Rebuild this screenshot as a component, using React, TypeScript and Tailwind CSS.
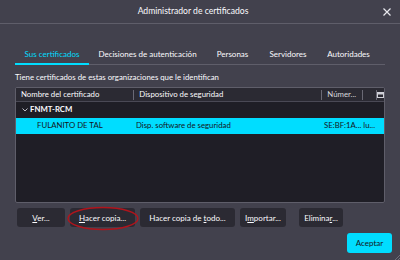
import React from "react";

export default function App() {
  const btn =
    "h-[19px] rounded-[3px] bg-[#2b2a33] text-[8px] text-[#fbfbfe] flex items-center justify-center whitespace-nowrap";
  return (
    <div
      className="w-[400px] h-[260px] bg-[#42414d] text-[#fbfbfe] flex flex-col relative overflow-hidden"
      style={{ fontFamily: 'Lato, "Noto Sans", sans-serif' }}
    >
      {/* title bar */}
      <div className="h-[24px] border-b border-[#5f5e6a] flex items-center justify-center pr-[14px] relative shrink-0">
        <span className="text-[8.6px]">Administrador de certificados</span>
        <svg
          className="absolute right-[9px] top-[8px]"
          width="8"
          height="8"
          viewBox="0 0 8 8"
        >
          <path d="M0.5 0.5 L7.5 7.5 M7.5 0.5 L0.5 7.5" stroke="#e8e8ee" strokeWidth="1.2" />
        </svg>
      </div>

      {/* tabs */}
      <div className="mx-[15px] mt-[20px] flex border-b border-[#5f5e6a] h-[21px] text-[8px] whitespace-nowrap">
        <div className="w-[74px] shrink-0 flex items-center justify-center text-[#00ddff] border-b-2 border-[#00ddff] -mb-px">
          Sus certificados
        </div>
        <div className="w-[117px] shrink-0 flex items-center justify-center">Decisiones de autenticación</div>
        <div className="w-[53px] shrink-0 flex items-center justify-center">Personas</div>
        <div className="w-[58px] shrink-0 flex items-center justify-center">Servidores</div>
        <div className="w-[63px] shrink-0 flex items-center justify-center">Autoridades</div>
      </div>

      <div className="mx-[15px] mt-[7px] text-[7.8px] leading-[11px] whitespace-nowrap">
        Tiene certificados de estas organizaciones que le identifican
      </div>

      {/* table */}
      <div className="mx-[15px] mt-[4px] h-[116px] border border-[#5f5e6a] rounded-[2px] bg-[#1f1e26] flex flex-col overflow-hidden shrink-0">
        <div className="h-[14px] bg-[#2b2a33] border-b border-[#4a4955] flex items-center text-[7.8px] shrink-0 whitespace-nowrap">
          <div className="w-[119px] pl-[5px] border-r border-[#6a6975] h-[10px] flex items-center">
            Nombre del certificado
          </div>
          <div className="w-[189px] pl-[5px] border-r border-[#6a6975] h-[10px] flex items-center">
            Dispositivo de seguridad
          </div>
          <div className="w-[41px] pl-[5px] border-r border-[#6a6975] h-[10px] flex items-center text-[#d8d8de]">
            Númer...
          </div>
          <div className="w-[14px] border-r border-[#6a6975] h-[10px]" />
          <div className="flex-1 flex items-center justify-center">
            <svg width="7" height="6" viewBox="0 0 7 6">
              <rect x="0.5" y="0.5" width="6" height="5" fill="none" stroke="#d0d0d8" />
              <rect x="1" y="1" width="5" height="1.5" fill="#d0d0d8" />
            </svg>
          </div>
        </div>
        <div className="h-[16px] flex items-center text-[7.8px] font-bold pl-[6px] shrink-0">
          <svg width="6" height="4" viewBox="0 0 6 4" className="mr-[2px]">
            <path d="M0.5 0.5 L3 3 L5.5 0.5" stroke="#cfcfd8" fill="none" strokeWidth="0.9" />
          </svg>
          FNMT-RCM
        </div>
        <div className="h-[16px] bg-[#00ddff] text-[#15141a] flex items-center text-[7.8px] shrink-0 whitespace-nowrap">
          <div className="w-[119px] pl-[21px]">FULANITO DE TAL</div>
          <div className="w-[189px] pl-[1px]">Disp. software de seguridad</div>
          <div className="pl-[0px]">SE:BF:1A... lu...</div>
        </div>
      </div>

      {/* buttons */}
      <div className="mx-[17px] mt-[5px] flex gap-[5px] shrink-0">
        <div className={`${btn} w-[48px]`}>
          <span>
            <span className="underline underline-offset-1">V</span>er...
          </span>
        </div>
        <div className={`${btn} w-[65px]`}>
          <span>
            <span className="underline underline-offset-1">H</span>acer copia...
          </span>
        </div>
        <div className={`${btn} w-[95px]`}>
          <span>
            Hacer copia de <span className="underline underline-offset-1">t</span>odo...
          </span>
        </div>
        <div className={`${btn} w-[46px]`}>
          <span>
            I<span className="underline underline-offset-1">m</span>portar...
          </span>
        </div>
        <div className={`${btn} w-[44px] ml-[8px]`}>
          <span>
            Elimina<span className="underline underline-offset-1">r</span>...
          </span>
        </div>
      </div>

      <div className="flex justify-end mr-[8px] mt-[6px]">
        <div className="w-[45px] h-[20px] rounded-[3px] bg-[#00ddff] text-[#15141a] text-[8px] flex items-center justify-center">
          Aceptar
        </div>
      </div>

      {/* red ellipse annotation */}
      <svg
        className="absolute left-[66px] top-[206px]"
        width="74"
        height="25"
        viewBox="0 0 74 25"
      >
        <ellipse cx="37" cy="12.5" rx="35" ry="11" fill="none" stroke="#b0141c" strokeWidth="1.4" />
      </svg>

      {/* resize grip */}
      <svg className="absolute right-0 bottom-0" width="6" height="6" viewBox="0 0 6 6">
        <path d="M6 1 L1 6 M6 4 L4 6" stroke="#7a7985" strokeWidth="0.8" />
      </svg>
    </div>
  );
}
